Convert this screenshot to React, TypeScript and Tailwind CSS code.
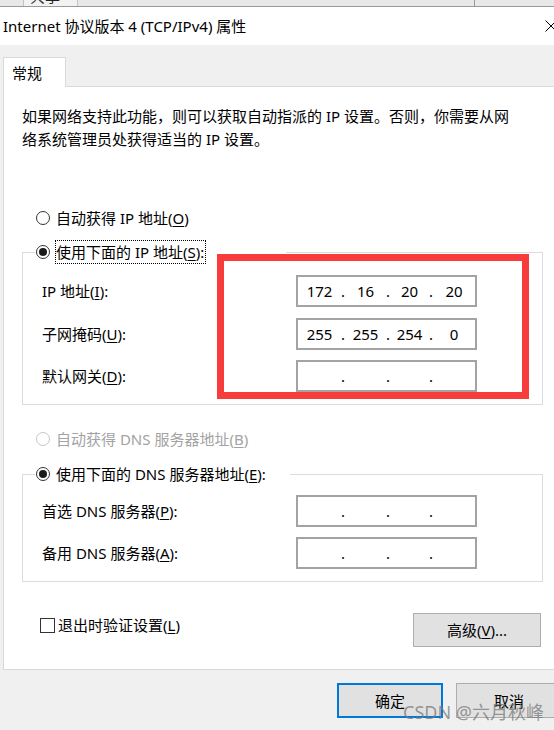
import React from "react";

function Radio({ checked = false, disabled = false }: { checked?: boolean; disabled?: boolean }) {
  return (
    <span
      className={
        "w-[14px] h-[14px] rounded-full border bg-white flex items-center justify-center shrink-0 " +
        (disabled ? "border-[#c6c6c6]" : "border-[#333333]")
      }
    >
      {checked && <span className="w-[8px] h-[8px] rounded-full bg-[#1a1a1a]" />}
    </span>
  );
}

function U({ c }: { c: string }) {
  return <span className="underline underline-offset-2 decoration-1">{c}</span>;
}

function IpBox({ v }: { v: string[] }) {
  const seg = ["w-[43px]", "w-[41px]", "w-[39px]", "w-[42px]"];
  return (
    <div className="w-[181px] h-[32px] border-2 border-[#a3a3a3] bg-white flex items-center shrink-0 leading-[20px]">
      <span className={seg[0] + " text-center"}>{v[0]}</span>
      <span className="w-[4px] flex justify-center">.</span>
      <span className={seg[1] + " text-center"}>{v[1]}</span>
      <span className="w-[4px] flex justify-center">.</span>
      <span className={seg[2] + " text-center"}>{v[2]}</span>
      <span className="w-[4px] flex justify-center">.</span>
      <span className={seg[3] + " text-center"}>{v[3]}</span>
    </div>
  );
}

function Row({ label, v, className = "" }: { label: React.ReactNode; v: string[]; className?: string }) {
  return (
    <div className={"flex items-center h-[32px] " + className}>
      <span className="w-[254px] leading-[20px]">{label}</span>
      <IpBox v={v} />
    </div>
  );
}

export default function App() {
  return (
    <div className="w-[554px] h-[730px] overflow-hidden bg-[#f0f0f0] relative font-['Noto_Sans','Noto_Sans_CJK_SC',sans-serif] text-[15px] text-black">
      {/* strip of window behind */}
      <div className="h-[7px] bg-[#e8e8e8] border-b border-[#9a9a9a] flex overflow-hidden">
        <div className="w-[23px] shrink-0" />
        <div className="w-[55px] shrink-0 border-x border-[#c4c4c4] bg-[#f2f2f2] overflow-hidden">
          <div className="-mt-[14px] pl-[6px] leading-[20px] text-[15px] text-[#222]">共享</div>
        </div>
        <div className="w-[396px] shrink-0" />
        <div className="flex-1 border-l border-[#9a9a9a]" />
      </div>

      {/* title bar */}
      <div className="h-[38px] bg-white flex items-center justify-between">
        <span className="pl-[3px] leading-[20px]">Internet 协议版本 4 (TCP/IPv4) 属性</span>
        <svg className="-mr-[3px] shrink-0" width="12" height="12" viewBox="0 0 12 12">
          <path d="M0.5 0.5 L11.5 11.5 M11.5 0.5 L0.5 11.5" stroke="#000" strokeWidth="1" />
        </svg>
      </div>

      {/* body */}
      <div className="px-[3px] pt-[12px]">
        <div className="relative z-10 w-[63px] h-[30px] bg-white border border-b-0 border-[#d9d9d9] pl-[8px] flex items-center leading-[20px]">
          常规
        </div>
        <div className="-mt-px w-[600px] h-[584px] bg-white border border-[#d9d9d9]">
          <p className="pt-[18px] pl-[18px] leading-[23px]">
            如果网络支持此功能，则可以获取自动指派的 IP 设置。否则，你需要从网
            <br />
            络系统管理员处获得适当的 IP 设置。
          </p>

          <div className="mt-[55px] ml-[32px] h-[24px] flex items-center gap-[6px] leading-[20px]">
            <Radio />
            <span>
              自动获得 IP 地址(<U c="O" />)
            </span>
          </div>

          {/* group 1 */}
          <div className="mt-[22px] ml-[18px] w-[521px] border border-[#dcdcdc] relative pt-[22px] pb-[12px] pl-[19px]">
            <div className="absolute left-[12px] -top-[13px] h-[24px] w-[251px] bg-white flex items-center pl-[1px] gap-[5px]">
              <Radio checked />
              <span className="border border-dotted border-black leading-[22px] pr-[1px]">
                使用下面的 IP 地址(<U c="S" />):
              </span>
            </div>
            <Row
              label={
                <>
                  IP 地址(<U c="I" />):
                </>
              }
              v={["172", "16", "20", "20"]}
            />
            <Row
              className="mt-[11px]"
              label={
                <>
                  子网掩码(<U c="U" />):
                </>
              }
              v={["255", "255", "254", "0"]}
            />
            <Row
              className="mt-[10px]"
              label={
                <>
                  默认网关(<U c="D" />):
                </>
              }
              v={["", "", "", ""]}
            />
            <div className="absolute left-[194px] top-[1px] w-[312px] h-[145px] border-[7px] border-[#f83b3b]" />
          </div>

          <div className="mt-[22px] ml-[32px] h-[24px] flex items-center gap-[6px] leading-[20px] text-[#a3a3a3]">
            <Radio disabled />
            <span>
              自动获得 DNS 服务器地址(<U c="B" />)
            </span>
          </div>

          {/* group 2 */}
          <div className="mt-[23px] ml-[18px] w-[521px] border border-[#dcdcdc] relative pt-[20px] pb-[12px] pl-[19px]">
            <div className="absolute left-[12px] -top-[13px] h-[24px] w-[255px] bg-white flex items-center pl-[1px] gap-[5px]">
              <Radio checked />
              <span className="border border-transparent leading-[22px] pr-[1px]">
                使用下面的 DNS 服务器地址(<U c="E" />):
              </span>
            </div>
            <Row
              label={
                <>
                  首选 DNS 服务器(<U c="P" />):
                </>
              }
              v={["", "", "", ""]}
            />
            <Row
              className="mt-[10px]"
              label={
                <>
                  备用 DNS 服务器(<U c="A" />):
                </>
              }
              v={["", "", "", ""]}
            />
          </div>

          <div className="mt-[31px] ml-[36px] w-[501px] flex items-start justify-between">
            <div className="h-[24px] flex items-center gap-[3px] leading-[20px]">
              <span className="w-[15px] h-[15px] border border-[#333] bg-white shrink-0" />
              <span>
                退出时验证设置(<U c="L" />)
              </span>
            </div>
            <div className="w-[128px] h-[34px] bg-[#e1e1e1] border border-[#adadad] flex items-center justify-center leading-[20px]">
              高级(<U c="V" />)...
            </div>
          </div>
        </div>

        {/* footer */}
        <div className="mt-[13px] ml-[334px] flex gap-[13px]">
          <div className="w-[106px] h-[35px] shrink-0 bg-[#e1e1e1] border-2 border-[#0078d7] flex items-center justify-center leading-[20px]">
            确定
          </div>
          <div className="w-[106px] h-[35px] shrink-0 bg-[#e1e1e1] border border-[#adadad] flex items-center justify-center leading-[20px]">
            取消
          </div>
        </div>
      </div>

      <div className="absolute left-[403px] top-[700px] text-[18px] leading-[24px] text-[rgba(120,120,120,0.75)]">
        CSDN @六月秋峰
      </div>
    </div>
  );
}
